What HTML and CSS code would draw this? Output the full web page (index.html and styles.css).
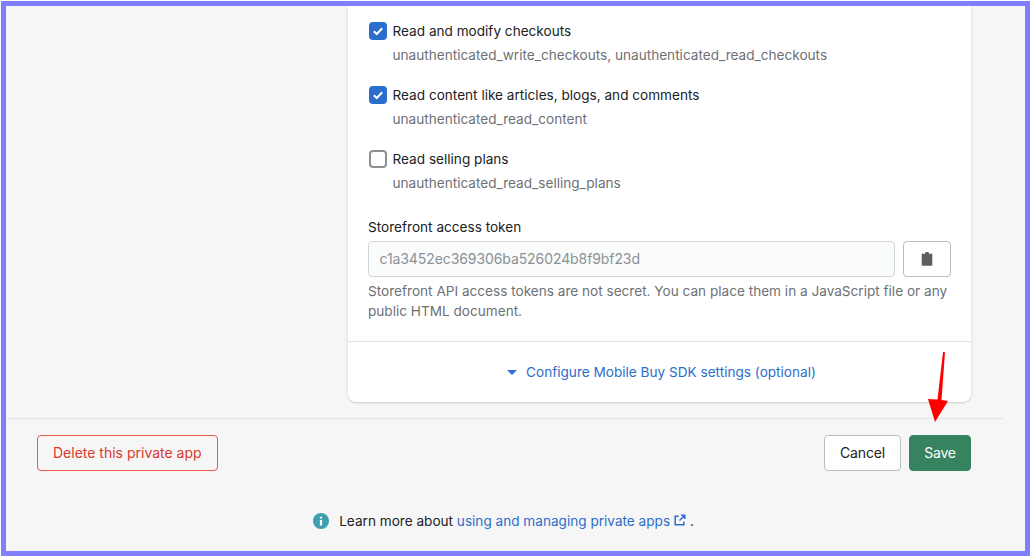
FILE: index.html
```html
<!DOCTYPE html>
<html lang="en">
<head>
<meta charset="utf-8">
<title>Private app settings</title>
<link rel="stylesheet" href="styles.css">
</head>
<body>
<div class="frame">
  <div class="page">
    <main class="main">
      <section class="card">
        <div class="card-body">
          <div class="options">
            <div class="option">
              <span class="check is-on"><svg viewBox="0 0 12 12" class="tick"><path d="M1.8 6.2 4.8 9 10.2 3.2"/></svg></span>
              <div class="option-text">
                <div class="option-label">Read and modify checkouts</div>
                <div class="option-scope">unauthenticated_write_checkouts, unauthenticated_read_checkouts</div>
              </div>
            </div>
            <div class="option">
              <span class="check is-on"><svg viewBox="0 0 12 12" class="tick"><path d="M1.8 6.2 4.8 9 10.2 3.2"/></svg></span>
              <div class="option-text">
                <div class="option-label">Read content like articles, blogs, and comments</div>
                <div class="option-scope">unauthenticated_read_content</div>
              </div>
            </div>
            <div class="option">
              <span class="check"></span>
              <div class="option-text">
                <div class="option-label">Read selling plans</div>
                <div class="option-scope">unauthenticated_read_selling_plans</div>
              </div>
            </div>
          </div>
          <div class="field-label">Storefront access token</div>
          <div class="field-row">
            <div class="token">c1a3452ec369306ba526024b8f9bf23d</div>
            <button class="copy" type="button" aria-label="Copy">
              <svg viewBox="0 0 12 14" class="clip"><path d="M4 1.2C4 .5 4.6 0 5.2 0h1.6C7.4 0 8 .5 8 1.2V2h1.2V1.5h1.3c.5 0 .8.4.8.8v10.6c0 .5-.4.9-.9.9H1.6c-.5 0-.9-.4-.9-.9V2.3c0-.4.3-.8.8-.8h1.3V2H4z"/></svg>
            </button>
          </div>
          <p class="help">Storefront API access tokens are not secret. You can place them in a JavaScript file or any public HTML document.</p>
        </div>
        <div class="card-foot">
          <a class="toggle" href="#"><span class="caret"></span>Configure Mobile Buy SDK settings (optional)</a>
        </div>
      </section>
    </main>
    <div class="actions">
      <button class="btn btn-danger" type="button">Delete this private app</button>
      <div class="actions-right">
        <button class="btn btn-plain" type="button">Cancel</button>
        <button class="btn btn-save" type="button">Save</button>
      </div>
    </div>
    <div class="learn">
      <svg viewBox="0 0 16 16" class="info"><circle cx="8" cy="8" r="8" class="info-bg"/><circle cx="8" cy="4.6" r="1.2" class="info-fg"/><rect x="6.9" y="7" width="2.2" height="5.6" rx=".5" class="info-fg"/></svg>
      <span>Learn more about <a href="#">using and managing private apps<svg viewBox="0 0 12 12" class="ext"><path d="M7 1.2h3.8V5M10.8 1.2 5.5 6.5M4.6 2.2H1.2v8.6h8.6V7.4"/></svg></a> .</span>
    </div>
  </div>
  <svg class="arrow" viewBox="0 0 30 80" aria-hidden="true"><path d="M16 1 18 1.2 14.5 49 21 50 8 71 1 48 10.5 48.5z"/></svg>
</div>
</body>
</html>
```
FILE: styles.css
```css
* { box-sizing: border-box; }
html, body { margin: 0; padding: 0; background: #fff; }
body {
  font-family: Inter, "Liberation Sans", sans-serif;
  font-size: 13.6px;
  line-height: 20px;
  color: #202223;
  overflow: hidden;
}
.frame {
  position: relative;
  width: 1029px;
  height: 555px;
  margin: 1px 0 0 1px;
  border: 5px solid #8080ff;
  background: #f6f6f7;
  overflow: hidden;
}
.page { width: 997px; }
.main { padding: 0 32px 0 342px; }
.card {
  background: #fff;
  border-radius: 0 0 8px 8px;
  box-shadow: 0 0 5px rgba(23, 24, 24, .05), 0 1px 2px rgba(0, 0, 0, .15);
}
.card-body { padding: 15px 20px 20px; }
.options { display: flex; flex-direction: column; gap: 20px; }
.option { display: flex; }
.check {
  flex: none;
  width: 18px;
  height: 18px;
  margin: 1px 5.5px 0 1px;
  border: 2px solid #8c9196;
  border-radius: 4px;
  background: #fff;
}
.check.is-on {
  display: flex;
  align-items: center;
  justify-content: center;
  border: 0;
  background: #2c6ecb;
}
.tick { width: 12px; height: 12px; fill: none; stroke: #fff; stroke-width: 2; }
.option-scope { margin-top: 4px; color: #6d7175; }
.field-label { margin: 24px 0 4px; }
.field-row { display: flex; gap: 8px; }
.token {
  flex: 1;
  height: 36px;
  padding: 7px 10.5px;
  border: 1px solid #d2d5d8;
  border-radius: 4px;
  background: #fafbfb;
  color: #8c9196;
  font-size: 14px;
  letter-spacing: -.09px;
}
.copy {
  display: flex;
  align-items: center;
  justify-content: center;
  width: 48px;
  height: 36px;
  padding: 0;
  border: 1px solid #babfc3;
  border-radius: 4px;
  background: #fff;
}
.clip { width: 12px; height: 14px; fill: #5c5f62; }
.help { margin: 4px 0 0; color: #6d7175; }
.card-foot {
  display: flex;
  align-items: center;
  justify-content: center;
  height: 61px;
  padding-left: 4px;
  border-top: 1px solid #e1e3e5;
}
.toggle { display: flex; align-items: center; color: #2c6ecb; text-decoration: none; }
.caret {
  width: 0;
  height: 0;
  margin-right: 9px;
  border: 5px solid transparent;
  border-top: 5px solid #2c6ecb;
  border-bottom: 0;
}
.actions {
  display: flex;
  justify-content: space-between;
  margin-top: 16px;
  padding: 16px 32px 0 31px;
  border-top: 1px solid #e1e3e5;
}
.actions-right { display: flex; gap: 8px; }
.btn {
  height: 36px;
  padding: 0 15px;
  border-radius: 4px;
  font: inherit;
  font-size: 14px;
  background: #fff;
}
.btn-danger { border: 1px solid #e8594a; background: transparent; color: #d83a2a; }
.btn-plain {
  border: 1px solid #babfc3;
  color: #202223;
  letter-spacing: -.15px;
}
.btn-save {
  width: 62px;
  padding: 0;
  border: 1px solid #37825f;
  background: #37825f;
  color: #fff;
  letter-spacing: -.2px;
}
.learn {
  display: flex;
  align-items: center;
  justify-content: center;
  gap: 10px;
  margin-top: 40px;
  padding-right: 2px;
}
.info { width: 16px; height: 16px; }
.info-bg { fill: #3d9fb0; }
.info-fg { fill: #fff; }
.learn a { color: #2c6ecb; text-decoration: none; }
.ext {
  width: 12px;
  height: 12px;
  margin-left: 4px;
  fill: none;
  stroke: #2c6ecb;
  stroke-width: 1.5;
}
.arrow {
  position: absolute;
  left: 921px;
  top: 345px;
  width: 30px;
  height: 80px;
  fill: #f00;
}
```
